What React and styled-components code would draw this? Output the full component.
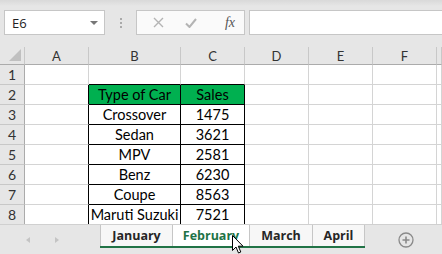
import React from "react";
import styled, { createGlobalStyle } from "styled-components";

const Global = createGlobalStyle`
  html, body { margin: 0; padding: 0; width: 442px; height: 254px; overflow: hidden; background: #e6e6e6; }
  * { box-sizing: border-box; }
`;

const Page = styled.div`
  position: relative;
  width: 442px;
  height: 254px;
  display: flex;
  flex-direction: column;
  font-family: Lato, "Liberation Sans", sans-serif;
  overflow: hidden;
`;

const Toolbar = styled.div`
  height: 47px;
  display: flex;
  align-items: flex-start;
  padding: 10px 0 0 4px;
  background: linear-gradient(#d9d9d9 0px, #e6e6e6 6px, #e6e6e6 100%);
`;

const NameBox = styled.div`
  width: 101px;
  height: 25px;
  background: #fff;
  border: 1px solid #c6c6c6;
  display: flex;
  align-items: center;
  justify-content: space-between;
  padding: 0 6px 0 7px;
  font-family: "Open Sans", sans-serif;
  font-size: 13px;
  color: #222;
`;

const Caret = styled.span`
  width: 0;
  height: 0;
  border-left: 4px solid transparent;
  border-right: 4px solid transparent;
  border-top: 4px solid #777;
`;

const Grip = styled.div`
  width: 31px;
  height: 25px;
  display: flex;
  flex-direction: column;
  align-items: center;
  justify-content: center;
  gap: 2px;
  & > i { width: 2px; height: 2px; background: #aaa; display: block; }
`;

const FxBox = styled.div`
  width: 109px;
  height: 25px;
  background: #fafafa;
  border: 1px solid #c6c6c6;
  display: flex;
  align-items: center;
  padding: 0 0 0 13px;
  gap: 0;
`;

const FxBtn = styled.div`
  width: ${(p) => p.$w}px;
  display: flex;
  align-items: center;
  justify-content: center;
`;

const FxText = styled.span`
  font-family: "Liberation Serif", serif;
  font-style: italic;
  font-size: 14px;
  color: #555;
`;

const FormulaInput = styled.div`
  flex: 1;
  height: 25px;
  margin-left: 4px;
  background: #fff;
  border: 1px solid #c6c6c6;
  border-right: none;
`;

const Grid = styled.div`
  display: grid;
  grid-template-columns: 25px 64px 92px 64px 64px 64px 64px 1fr;
  grid-auto-rows: 20px;
  grid-template-rows: 18px;
  background: #fff;
  height: 177px;
  overflow: hidden;
`;

const ColHead = styled.div`
  background: #e6e6e6;
  border-right: 1px solid #c8c8c8;
  border-bottom: 1px solid #ababab;
  display: flex;
  align-items: center;
  justify-content: center;
  font-size: 13px;
  color: #333;
  position: relative;
`;

const Corner = styled.div`
  position: absolute;
  right: 3px;
  bottom: 3px;
  width: 0;
  height: 0;
  border-left: 12px solid transparent;
  border-bottom: 12px solid #c0c0c0;
`;

const RowHead = styled.div`
  background: #e6e6e6;
  border-right: 1px solid #ababab;
  border-bottom: 1px solid #c8c8c8;
  display: flex;
  align-items: center;
  justify-content: center;
  font-size: 14px;
  color: #333;
`;

const Cell = styled.div`
  border-right: 1px solid ${(p) => (p.$r ? "#000" : "#d4d4d4")};
  border-bottom: 1px solid ${(p) => (p.$b ? "#000" : "#d4d4d4")};
  background: ${(p) => (p.$head ? "#00b050" : "#fff")};
  display: flex;
  align-items: center;
  justify-content: center;
  font-size: 14.5px;
  color: #000;
  white-space: nowrap;
`;

const TabBar = styled.div`
  flex: 1;
  display: flex;
  align-items: flex-start;
  background: #e6e6e6;
  border-top: 1px solid #d0d0d0;
`;

const Nav = styled.div`
  width: 100px;
  height: 29px;
  display: flex;
  align-items: center;
  padding-left: 26px;
  gap: 25px;
`;

const NavArrow = styled.span`
  width: 0;
  height: 0;
  border-top: 3px solid transparent;
  border-bottom: 3px solid transparent;
  ${(p) => (p.$dir === "left" ? "border-right: 4px solid #c4c4c4;" : "border-left: 4px solid #c4c4c4;")}
`;

const Tabs = styled.div`
  display: flex;
  border-bottom: 2px solid #217346;
  height: 23px;
`;

const Tab = styled.div`
  width: ${(p) => p.$w}px;
  height: 21px;
  background: ${(p) => (p.$active ? "#fff" : "#f7f7f7")};
  border-left: 1px solid #c6c6c6;
  ${(p) => (p.$last ? "border-right: 1px solid #c6c6c6;" : "")}
  display: flex;
  align-items: center;
  justify-content: center;
  font-family: "Open Sans", sans-serif;
  font-weight: 700;
  font-size: 12.5px;
  color: ${(p) => (p.$active ? "#217346" : "#262626")};
`;

const AddWrap = styled.div`
  flex: 1;
  height: 29px;
  display: flex;
  align-items: center;
  padding-left: 33px;
`;

const Cursor = styled.svg`
  position: absolute;
  left: 232px;
  top: 235px;
`;

const cols = ["A", "B", "C", "D", "E", "F", ""];
const data = [
  ["Type of Car", "Sales"],
  ["Crossover", "1475"],
  ["Sedan", "3621"],
  ["MPV", "2581"],
  ["Benz", "6230"],
  ["Coupe", "8563"],
  ["Maruti Suzuki", "7521"],
];

export default function App() {
  const rows = [];
  for (let r = 1; r <= 9; r++) {
    const inTable = r >= 2 && r <= 8;
    const d = inTable ? data[r - 2] : null;
    rows.push(<RowHead key={`h${r}`}>{r <= 8 ? r : ""}</RowHead>);
    rows.push(<Cell key={`a${r}`} $r={inTable} />);
    rows.push(
      <Cell key={`b${r}`} $r={inTable} $b={r === 1 || inTable} $head={r === 2}>
        {d ? d[0] : ""}
      </Cell>
    );
    rows.push(
      <Cell key={`c${r}`} $r={inTable} $b={r === 1 || inTable} $head={r === 2}>
        {d ? d[1] : ""}
      </Cell>
    );
    for (let c = 0; c < 4; c++) rows.push(<Cell key={`x${r}${c}`} />);
  }
  return (
    <Page>
      <Global />
      <Toolbar>
        <NameBox>
          E6
          <Caret />
        </NameBox>
        <Grip>
          <i />
          <i />
          <i />
        </Grip>
        <FxBox>
          <FxBtn $w={16}>
            <svg width="11" height="11" viewBox="0 0 11 11">
              <path d="M1 1L10 10M10 1L1 10" stroke="#b4b4b4" strokeWidth="1.4" />
            </svg>
          </FxBtn>
          <FxBtn $w={50}>
            <svg width="12" height="10" viewBox="0 0 12 10">
              <path d="M1 5.5L4.5 9L11 1" stroke="#b4b4b4" strokeWidth="2" fill="none" />
            </svg>
          </FxBtn>
          <FxBtn $w={28}>
            <FxText>fx</FxText>
          </FxBtn>
        </FxBox>
        <FormulaInput />
      </Toolbar>
      <Grid>
        <ColHead>
          <Corner />
        </ColHead>
        {cols.map((c, i) => (
          <ColHead key={i}>{c}</ColHead>
        ))}
        {rows}
      </Grid>
      <TabBar>
        <Nav>
          <NavArrow $dir="left" />
          <NavArrow $dir="right" />
        </Nav>
        <Tabs>
          <Tab $w={72}>January</Tab>
          <Tab $w={77} $active>February</Tab>
          <Tab $w={63}>March</Tab>
          <Tab $w={53} $last>April</Tab>
        </Tabs>
        <AddWrap>
          <svg width="16" height="16" viewBox="0 0 16 16">
            <circle cx="8" cy="8" r="7" fill="none" stroke="#8a8a8a" strokeWidth="1.3" />
            <path d="M8 4.5V11.5M4.5 8H11.5" stroke="#8a8a8a" strokeWidth="1.6" />
          </svg>
        </AddWrap>
      </TabBar>
      <Cursor width="12" height="19" viewBox="0 0 12 19">
        <path d="M0.5 0.5V15.5L4 12L6.5 18L8.8 17L6.3 11.2H11L0.5 0.5Z" fill="#fff" stroke="#000" strokeWidth="1" />
      </Cursor>
    </Page>
  );
}
